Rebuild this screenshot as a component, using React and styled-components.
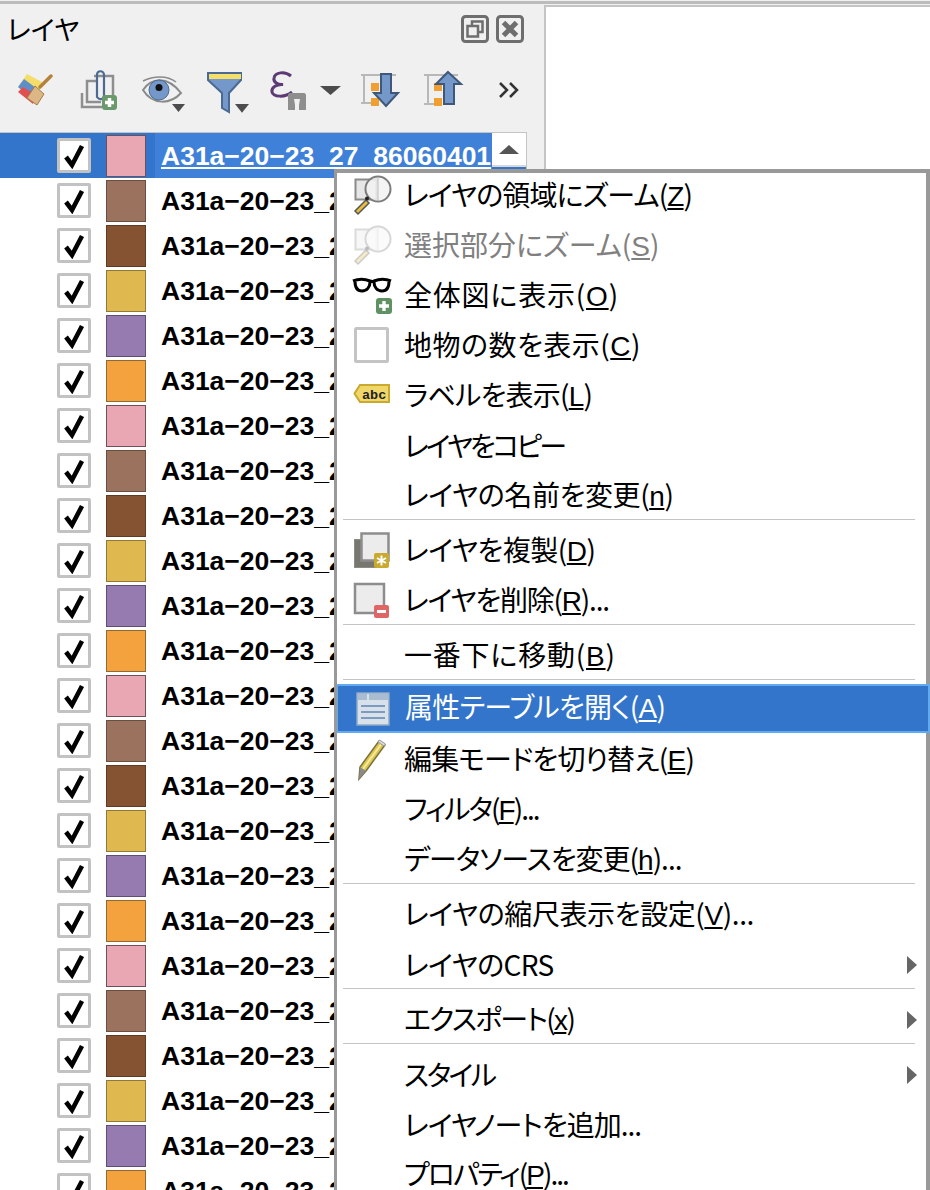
import React from 'react';
import styled, { createGlobalStyle } from 'styled-components';

const Global = createGlobalStyle`
  html, body { margin: 0; padding: 0; background: #fff; }
  body {
    font-family: "Noto Sans CJK JP", "Liberation Sans", sans-serif;
    font-feature-settings: "palt";
    color: #000;
  }
`;

const Page = styled.div`
  position: relative;
  width: 930px;
  height: 1190px;
  overflow: hidden;
  background: #f0f0f0;
  display: flex;
  flex-direction: column;
`;
const TopRule = styled.div`
  height: 3px;
  margin-top: 1px;
  flex: none;
  background: #bcbcbc;
`;
const Main = styled.div`
  flex: 1;
  display: flex;
  min-height: 0;
`;
const Dock = styled.div`
  width: 544px;
  flex: none;
  display: flex;
  flex-direction: column;
`;
const Canvas = styled.div`
  flex: 1;
  margin-top: 1px;
  background: #fff;
  border-left: 2px solid #c4c4c4;
  border-top: 2px solid #c4c4c4;
`;
const TitleBar = styled.div`
  height: 55px;
  flex: none;
  display: flex;
  align-items: center;
  padding: 0 20px 6px 7px;
  box-sizing: border-box;
`;
const Title = styled.div`
  font-size: 27px;
  line-height: 49px;
  flex: 1;
`;
const DockButton = styled.svg`
  width: 28px;
  height: 28px;
  margin-left: 7px;
  display: block;
`;
const Toolbar = styled.div`
  height: 74px;
  flex: none;
  display: flex;
  align-items: flex-start;
  padding-top: 11px;
  box-sizing: border-box;
`;
const Tool = styled.svg`
  height: 44px;
  width: ${p => p.$w}px;
  margin-left: ${p => p.$gap}px;
  flex: none;
  display: block;
  overflow: visible;
`;
const Tree = styled.div`
  position: relative;
  flex: 1;
  margin-right: 17px;
  background: #fff;
  border-top: 1px solid #c4c4c4;
  border-right: 1px solid #c4c4c4;
  margin-top: -1px;
  overflow: hidden;
`;
const Row = styled.div`
  height: 45px;
  display: flex;
  align-items: center;
  padding-left: 57px;
  background: ${p => (p.$selected ? '#3375cb' : '#fff')};
`;
const Check = styled.div`
  width: 34px;
  height: 35px;
  box-sizing: border-box;
  flex: none;
  background: #fff;
  border: 3px solid #c2c2c2;
  border-radius: 2px;
  display: flex;
  align-items: center;
  justify-content: center;
`;
const Swatch = styled.div`
  width: 40px;
  height: 42px;
  box-sizing: border-box;
  flex: none;
  margin-left: 15px;
  background: ${p => p.$fill};
  border: 1px solid ${p => p.$line};
`;
const LayerName = styled.div`
  margin-left: ${p => (p.$selected ? 9 : 15)}px;
  padding-left: ${p => (p.$selected ? 6 : 0)}px;
  width: ${p => (p.$selected ? 331 : 400)}px;
  height: 45px;
  white-space: nowrap;
  overflow: hidden;
  flex: none;
  font: 700 26.5px/46px "Liberation Sans", Arial, sans-serif;
  color: ${p => (p.$selected ? '#fff' : '#000')};
  background: ${p => (p.$selected ? '#3f80d8' : 'transparent')};
  text-decoration: ${p => (p.$selected ? 'underline' : 'none')};
  text-underline-offset: 2px;
`;
const ScrollUp = styled.div`
  position: absolute;
  top: 0;
  right: 0;
  width: 34px;
  height: 32px;
  background: #fff;
  border-bottom: 2px solid #d8d8d8;
  display: flex;
  align-items: center;
  justify-content: center;
  &::before {
    content: '';
    border-left: 10px solid transparent;
    border-right: 10px solid transparent;
    border-bottom: 9px solid #555;
  }
`;
const Menu = styled.div`
  position: absolute;
  left: 334px;
  top: 169px;
  width: 596px;
  height: 1060px;
  box-sizing: border-box;
  background: #fff;
  border-style: solid;
  border-color: #999;
  border-width: 4px 4px 0 3px;
  display: flex;
  flex-direction: column;
  gap: 4px;
`;
const Item = styled.div`
  height: ${p => (p.$active ? 49 : 46)}px;
  margin: ${p => (p.$active ? '-4px -4px 0 0' : '0')};
  box-sizing: border-box;
  flex: none;
  display: flex;
  align-items: center;
  font-size: 28px;
  white-space: nowrap;
  color: ${p => (p.$active ? '#fff' : p.$disabled ? '#808080' : '#000')};
  background: ${p => (p.$active ? '#3375cb' : 'transparent')};
  border: ${p => (p.$active ? '2px solid #62aaf0' : 'none')};
  border-left-width: ${p => (p.$active ? 1 : 0)}px;
`;
const IconSlot = styled.div`
  width: 40px;
  height: 40px;
  flex: none;
  margin-left: 15px;
  margin-right: 13px;
  svg { display: block; overflow: visible; }
`;
const ItemText = styled.span`
  display: block;
  line-height: 40px;
  padding-bottom: 2px;
  margin-left: -1px;
  letter-spacing: ${p => p.$track || 0}px;
`;
const Key = styled.span`
  text-decoration: underline;
  text-underline-offset: 2px;
  font-family: "Liberation Sans", Arial, sans-serif;
`;
const Arrow = styled.div`
  margin-left: auto;
  margin-right: 9px;
  border-top: 9px solid transparent;
  border-bottom: 9px solid transparent;
  border-left: 10px solid #666;
`;
const Sep = styled.div`
  height: 1px;
  flex: none;
  margin: -4px 11px 4px 6px;
  background: #c4c4c4;
`;

const CheckMark = () => (
  <svg width="24" height="26" viewBox="0 0 24 26">
    <path d="M4 14l6 8L20 3" fill="none" stroke="#000" strokeWidth="4.6" strokeLinejoin="miter" />
  </svg>
);

const ZoomIcon = ({ faded }) => (
  <svg width="40" height="40" viewBox="0 0 40 40" opacity={faded ? 0.3 : 1}>
    <rect x="3.500" y="3.500" width="21" height="20" fill="#e6e6e6" stroke="#8a8a8a" strokeWidth="2" />
    <path d="M14 24L3 35l3 3 11-11z" fill="#e6bf3e" stroke="#555" strokeWidth="1.5" />
    <circle cx="26" cy="13" r="12.5" fill="#f2f2f2" fillOpacity=".85" stroke="#7c7c7c" strokeWidth="2" />
    <path d="M26 1.500v23" stroke="#bbb" strokeWidth="1" />
    <circle cx="15" cy="22.5" r="2" fill="#222" />
  </svg>
);
const GlassesIcon = () => (
  <svg width="40" height="40" viewBox="0 0 40 40">
    <path d="M1 5c5-2 12-2 17 0 2 .8 3 .8 4 0 5-2 12-2 17 0M3 5c0 6 2 10 7 10s8-4 8-9M22 6c0 5 3 9 8 9s7-4 7-10" fill="none" stroke="#000" strokeWidth="3" />
    <rect x="24" y="22" width="16" height="16" rx="3" fill="#5f9163" />
    <path d="M32 25v10M27 30h10" stroke="#fff" strokeWidth="3.4" />
  </svg>
);
const BlankIcon = () => (
  <svg width="40" height="40" viewBox="0 0 40 40">
    <rect x="3.500" y="2.500" width="32" height="33" rx="1" fill="#fff" stroke="#c4c4c4" strokeWidth="3" />
  </svg>
);
const LabelIcon = () => (
  <svg width="40" height="40" viewBox="0 0 40 40">
    <path d="M8 9h29v17H8l-5.500-8.500z" fill="#f0d76a" stroke="#c9a92e" strokeWidth="2" />
    <text x="10" y="23" fontFamily="Liberation Mono, monospace" fontWeight="700" fontSize="13.500" fill="#222">abc</text>
  </svg>
);
const DuplicateIcon = () => (
  <svg width="40" height="40" viewBox="0 0 40 40">
    <rect x="2.500" y="8.500" width="28" height="28" fill="#77776f" stroke="#8c8c84" />
    <rect x="9.500" y="2.500" width="27" height="27" fill="#ececec" stroke="#8d8d8d" strokeWidth="2.500" />
    <rect x="22" y="22" width="15" height="15" rx="2" fill="#c9a92e" />
    <path d="M29.500 24.500v10M25 27l9 5M34 27l-9 5" stroke="#fff" strokeWidth="2" />
  </svg>
);
const DeleteIcon = () => (
  <svg width="40" height="40" viewBox="0 0 40 40">
    <rect x="3" y="3" width="29" height="29" fill="#ececec" stroke="#8d8d8d" strokeWidth="2.500" />
    <rect x="22" y="24" width="15" height="13" rx="2" fill="#e06666" />
    <path d="M25 30.500h9" stroke="#fff" strokeWidth="3" />
  </svg>
);
const TableIcon = () => (
  <svg width="40" height="40" viewBox="0 0 40 40">
    <rect x="4" y="4" width="32" height="32" fill="#d8e0ea" stroke="#8fa8c6" strokeWidth="1.500" />
    <path d="M5 5h30v6H5z" fill="#a9bcd2" />
    <path d="M8 17h24M8 23h24M8 29h24" stroke="#7d9ac0" strokeWidth="2" />
    <path d="M15 5v6" stroke="#d8e0ea" strokeWidth="2" />
  </svg>
);
const PencilIcon = () => (
  <svg width="40" height="40" viewBox="0 0 40 40">
    <path d="M7 39l1-12L27 1l6 4-19 26z" fill="#dcc650" stroke="#7a7040" strokeWidth="1.500" />
    <path d="M11 29L30 3" stroke="#f4ea9a" strokeWidth="2" />
    <path d="M7 39l1-12 6 4z" fill="#8a8a8a" />
    <path d="M26 2l6 4 1.500-2-6-4z" fill="#ddd" stroke="#999" />
  </svg>
);

const RestoreGlyph = () => (
  <DockButton viewBox="0 0 28 28">
    <rect x="1.500" y="1.500" width="25" height="25" rx="3" fill="none" stroke="#6e6e6e" strokeWidth="3" />
    <path d="M11 11V6.500h10.500V17H17M6.500 11H17v10.500H6.500z" fill="none" stroke="#6e6e6e" strokeWidth="2.500" />
  </DockButton>
);
const CloseGlyph = () => (
  <DockButton viewBox="0 0 28 28">
    <rect x="1.500" y="1.500" width="25" height="25" rx="3" fill="none" stroke="#6e6e6e" strokeWidth="3" />
    <path d="M7.500 7.500l13 13M20.500 7.500l-13 13" stroke="#6e6e6e" strokeWidth="5" />
  </DockButton>
);

const Caret = ({ x, y, w = 12 }) => (
  <path d={`M${x} ${y}h${w}l-${w / 2} ${w * 0.62}z`} fill="#4c4c4c" />
);

const rows = [
  ['#e9a7b4', '#6d5058'], ['#9b725d', '#6a4f41'], ['#855331', '#5e3c24'],
  ['#dfb94f', '#8f7a3a'], ['#967bb1', '#5f4d72'], ['#f3a23d', '#8f6a35'],
];
const count = 24;

const menu = [
  { t: 'レイヤの領域にズーム(', k: 'Z', e: ')', i: <ZoomIcon />, track: -0.9 },
  { t: '選択部分にズーム(', k: 'S', e: ')', i: <ZoomIcon faded />, disabled: true },
  { t: '全体図に表示(', k: 'O', e: ')', i: <GlassesIcon />, track: 0.8 },
  { t: '地物の数を表示(', k: 'C', e: ')', i: <BlankIcon />, track: 0.5 },
  { t: 'ラベルを表示(', k: 'L', e: ')', i: <LabelIcon />, track: -0.8 },
  { t: 'レイヤをコピー', track: -3 },
  { t: 'レイヤの名前を変更(', k: 'n', e: ')', track: -0.4 },
  { sep: true },
  { t: 'レイヤを複製(', k: 'D', e: ')', i: <DuplicateIcon />, track: -0.5 },
  { t: 'レイヤを削除(', k: 'R', e: ')...', i: <DeleteIcon />, track: -1.2 },
  { sep: true },
  { t: '一番下に移動(', k: 'B', e: ')', track: 0.8 },
  { sep: true },
  { t: '属性テーブルを開く(', k: 'A', e: ')', i: <TableIcon />, active: true, track: -0.7 },
  { t: '編集モードを切り替え(', k: 'E', e: ')', i: <PencilIcon />, track: -0.8 },
  { t: 'フィルタ(', k: 'F', e: ')...', track: -2 },
  { t: 'データソースを変更(', k: 'h', e: ')...', track: -1 },
  { sep: true },
  { t: 'レイヤの縮尺表示を設定(', k: 'V', e: ')...', track: -0.4 },
  { t: 'レイヤのCRS', sub: true, track: -0.6 },
  { sep: true },
  { t: 'エクスポート(', k: 'x', e: ')', sub: true, track: -1.7 },
  { sep: true },
  { t: 'スタイル', sub: true, track: -2.5 },
  { t: 'レイヤノートを追加...', track: -1 },
  { t: 'プロパティ(', k: 'P', e: ')...', track: -2 },
];

export default function App() {
  return (
    <Page>
      <Global />
      <TopRule />
      <Main>
        <Dock>
          <TitleBar>
            <Title>レイヤ</Title>
            <RestoreGlyph />
            <CloseGlyph />
          </TitleBar>
          <Toolbar>
            <Tool $w={35} $gap={18} viewBox="0 0 35 44">
              <path d="M0 17L9 4l15 8-6 20z" fill="#f5dd6a" />
              <path d="M0 17l6-8 12 9-2 12z" fill="#5f8fc8" />
              <path d="M0 22l5-5 13 8-3 9z" fill="#e05050" />
              <path d="M22 17L33 6" stroke="#b5823c" strokeWidth="3.500" strokeLinecap="round" />
              <path d="M17 16l9 8-7 11-10-7z" fill="#dcb685" stroke="#a67a44" />
            </Tool>
            <Tool $w={36} $gap={29} viewBox="0 0 36 44">
              <path d="M12 6h19v19" fill="none" stroke="#8e8e8e" strokeWidth="2.500" />
              <path d="M15 11H5v21h14" fill="none" stroke="#8e8e8e" strokeWidth="2.500" />
              <path d="M0 23v14h20" fill="none" stroke="#8e8e8e" strokeWidth="2.500" />
              <path d="M15 27c2 3 7 3 7-1V5c0-5-7-5-7 0z" fill="none" stroke="#4a6a92" strokeWidth="2.200" />
              <rect x="20" y="25" width="15" height="15" rx="3" fill="#6a9a6c" />
              <path d="M27.500 28v9M23 32.500h9" stroke="#fff" strokeWidth="3.500" />
            </Tool>
            <Tool $w={42} $gap={25} viewBox="0 0 42 44">
              <path d="M0 20C8 8 24 5 38 23 28 34 10 36 0 20z" fill="#f0f0f0" stroke="#8a8a8a" strokeWidth="2" />
              <path d="M0 11C10 6 24 5 33 12" fill="none" stroke="#8a8a8a" strokeWidth="1.500" />
              <circle cx="16" cy="20" r="10" fill="#7398c9" stroke="#4a6a92" />
              <circle cx="16" cy="17.500" r="3.500" fill="#111" />
              <Caret x={29} y={34} w={13} />
            </Tool>
            <Tool $w={42} $gap={22} viewBox="0 0 42 44">
              <path d="M1 3h33v7L22 23v19l-7-4V23L1 10z" fill="#7398c9" stroke="#4a6a92" strokeWidth="2" />
              <rect x="2" y="4" width="32" height="5" fill="#f5df6c" />
              <Caret x={28} y={34} w={14} />
            </Tool>
            <Tool $w={35} $gap={22} viewBox="0 0 35 44">
              <path d="M20 6C14 1 4 2 3 8c-1 4 4 7 9 6.500C6 14 0 17 1 22c1 5 13 6 20 0" fill="none" stroke="#5d3a75" strokeWidth="3" />
              <path d="M17 25c0-1 1-2 2-2h14c1 0 2 1 2 2v15h-7v-5l1-6h-6l1 6v5h-7z" fill="#8e8e8e" />
            </Tool>
            <Tool $w={21} $gap={14} viewBox="0 0 21 44">
              <path d="M0 16h21l-10.500 9z" fill="#4c4c4c" />
            </Tool>
            <Tool $w={38} $gap={20} viewBox="0 0 38 44">
              <path d="M0 5h35M3 5v28M0 33h14" fill="none" stroke="#b8b8b8" strokeWidth="2" />
              <rect x="10" y="13" width="8" height="8" fill="#f0a030" />
              <rect x="10" y="28" width="8" height="8" fill="#f0a030" />
              <path d="M20 4h10v19h7L25 36 13 23h7z" fill="#7398c9" stroke="#3f587a" strokeWidth="2" />
            </Tool>
            <Tool $w={38} $gap={25} viewBox="0 0 38 44">
              <path d="M0 5h34M4 5v29M0 34h12" fill="none" stroke="#b8b8b8" strokeWidth="2" />
              <rect x="10" y="13" width="8" height="8" fill="#f0a030" />
              <rect x="10" y="28" width="8" height="8" fill="#f0a030" />
              <path d="M24 2l13 12h-7v20H20V14h-8z" fill="#7398c9" stroke="#3f587a" strokeWidth="2" />
            </Tool>
            <Tool $w={20} $gap={37} viewBox="0 0 20 44">
              <path d="M1 13l7 7-7 7M11 13l7 7-7 7" fill="none" stroke="#333" strokeWidth="2.500" />
            </Tool>
          </Toolbar>
          <Tree>
            {Array.from({ length: count }, (_, n) => {
              const [fill, line] = rows[n % 6];
              const selected = n === 0;
              return (
                <Row key={n} $selected={selected}>
                  <Check><CheckMark /></Check>
                  <Swatch $fill={fill} $line={line} />
                  <LayerName $selected={selected}>{`A31a−20−23_27_86060401`}</LayerName>
                </Row>
              );
            })}
            <ScrollUp />
          </Tree>
        </Dock>
        <Canvas />
      </Main>
      <Menu>
        {menu.map((m, n) =>
          m.sep ? (
            <Sep key={n} />
          ) : (
            <Item key={n} $active={m.active} $disabled={m.disabled}>
              <IconSlot>{m.i}</IconSlot>
              <ItemText $track={m.track}>
                {m.t}
                {m.k && <Key>{m.k}</Key>}
                {m.e}
              </ItemText>
              {m.sub && <Arrow />}
            </Item>
          )
        )}
      </Menu>
    </Page>
  );
}
